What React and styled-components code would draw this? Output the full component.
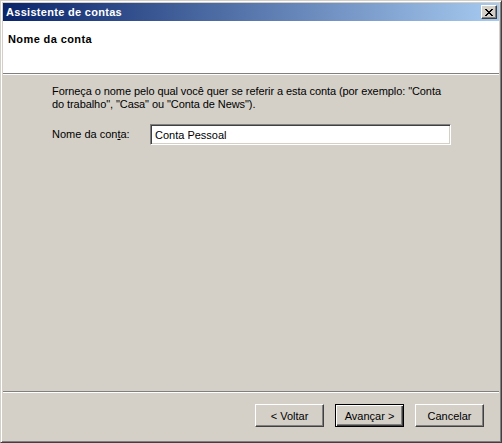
import React from "react";
import styled, { createGlobalStyle } from "styled-components";

const GlobalStyle = createGlobalStyle`
  html, body {
    margin: 0;
    padding: 0;
    background: #d4d0c8;
  }
  body {
    font-family: "Liberation Sans", Arial, sans-serif;
    font-size: 11px;
    color: #000;
  }
`;

const Window = styled.div`
  box-sizing: border-box;
  width: 502px;
  height: 443px;
  display: flex;
  flex-direction: column;
  background: #d4d0c8;
  border: 1px solid;
  border-color: #d4d0c8 #404040 #404040 #d4d0c8;
  box-shadow: inset 1px 1px #ffffff, inset -1px -1px #808080;
  padding: 2px;
`;

const TitleBar = styled.div`
  height: 18px;
  display: flex;
  align-items: center;
  justify-content: space-between;
  padding: 0 2px 0 2px;
  background: linear-gradient(to right, #0a246a, #a6caf0);
  color: #fff;
  font-weight: bold;
  font-size: 11px;
`;

const Caption = styled.span`
  padding-left: 1px;
  letter-spacing: 0.3px;
`;

const CloseButton = styled.button`
  box-sizing: border-box;
  width: 16px;
  height: 14px;
  padding: 0;
  display: flex;
  align-items: center;
  justify-content: center;
  background: #d4d0c8;
  border: 1px solid;
  border-color: #ffffff #404040 #404040 #ffffff;
  box-shadow: inset -1px -1px #808080;
`;

const Header = styled.div`
  height: 53px;
  background: #ffffff;
  border-bottom: 1px solid #808080;
  box-shadow: 0 1px #ffffff;
  padding: 12px 5px 0;
  box-sizing: border-box;
  font-weight: bold;
  letter-spacing: 0.4px;
`;

const Body = styled.div`
  flex: 1;
  margin-top: 1px;
  padding: 10px 20px 0 49px;
`;

const Intro = styled.p`
  margin: 0;
  line-height: 13px;
  width: 400px;
  letter-spacing: -0.08px;
`;

const FieldRow = styled.div`
  display: flex;
  align-items: center;
  margin-top: 13px;
`;

const Label = styled.label`
  width: 98px;
  line-height: 13px;
  u {
    text-decoration: underline;
  }
`;

const TextInput = styled.input`
  box-sizing: border-box;
  width: 301px;
  height: 21px;
  padding: 0 4px;
  font-family: "Liberation Sans", Arial, sans-serif;
  font-size: 11px;
  color: #000;
  background: #ffffff;
  border: 1px solid;
  border-color: #808080 #ffffff #ffffff #808080;
  box-shadow: inset 1px 1px #404040, inset -1px -1px #d4d0c8;
  outline: none;
`;

const Footer = styled.div`
  border-top: 1px solid #808080;
  box-shadow: inset 0 1px #ffffff;
  padding: 12px 15px 13px 0;
  display: flex;
  justify-content: flex-end;
  gap: 11px;
`;

const Button = styled.button`
  box-sizing: border-box;
  width: 69px;
  height: 23px;
  padding: 0;
  font-family: "Liberation Sans", Arial, sans-serif;
  font-size: 11px;
  color: #000;
  background: #d4d0c8;
  border: 1px solid;
  border-color: ${(p) => (p.$default ? "#000000" : "#ffffff #404040 #404040 #ffffff")};
  box-shadow: ${(p) =>
    p.$default
      ? "inset 1px 1px #ffffff, inset -1px -1px #404040, inset -2px -2px #808080"
      : "inset -1px -1px #808080"};
`;

function CloseGlyph() {
  return (
    <svg width="8" height="7" viewBox="0 0 8 7" shapeRendering="crispEdges">
      <path
        d="M0 0h2v1h-2zM6 0h2v1h-2zM1 1h2v1h-2zM5 1h2v1h-2zM2 2h4v1h-4zM3 3h2v1h-2zM2 4h4v1h-4zM1 5h2v1h-2zM5 5h2v1h-2zM0 6h2v1h-2zM6 6h2v1h-2z"
        fill="#000"
      />
    </svg>
  );
}

export default function App() {
  return (
    <>
      <GlobalStyle />
      <Window>
        <TitleBar>
          <Caption>Assistente de contas</Caption>
          <CloseButton aria-label="Fechar">
            <CloseGlyph />
          </CloseButton>
        </TitleBar>
        <Header>Nome da conta</Header>
        <Body>
          <Intro>
            Forneça o nome pelo qual você quer se referir a esta conta (por exemplo: "Conta
            do trabalho", "Casa" ou "Conta de News").
          </Intro>
          <FieldRow>
            <Label htmlFor="conta">
              Nome da con<u>t</u>a:
            </Label>
            <TextInput id="conta" defaultValue="Conta Pessoal" />
          </FieldRow>
        </Body>
        <Footer>
          <Button>&lt; Voltar</Button>
          <Button $default>Avançar &gt;</Button>
          <Button>Cancelar</Button>
        </Footer>
      </Window>
    </>
  );
}
